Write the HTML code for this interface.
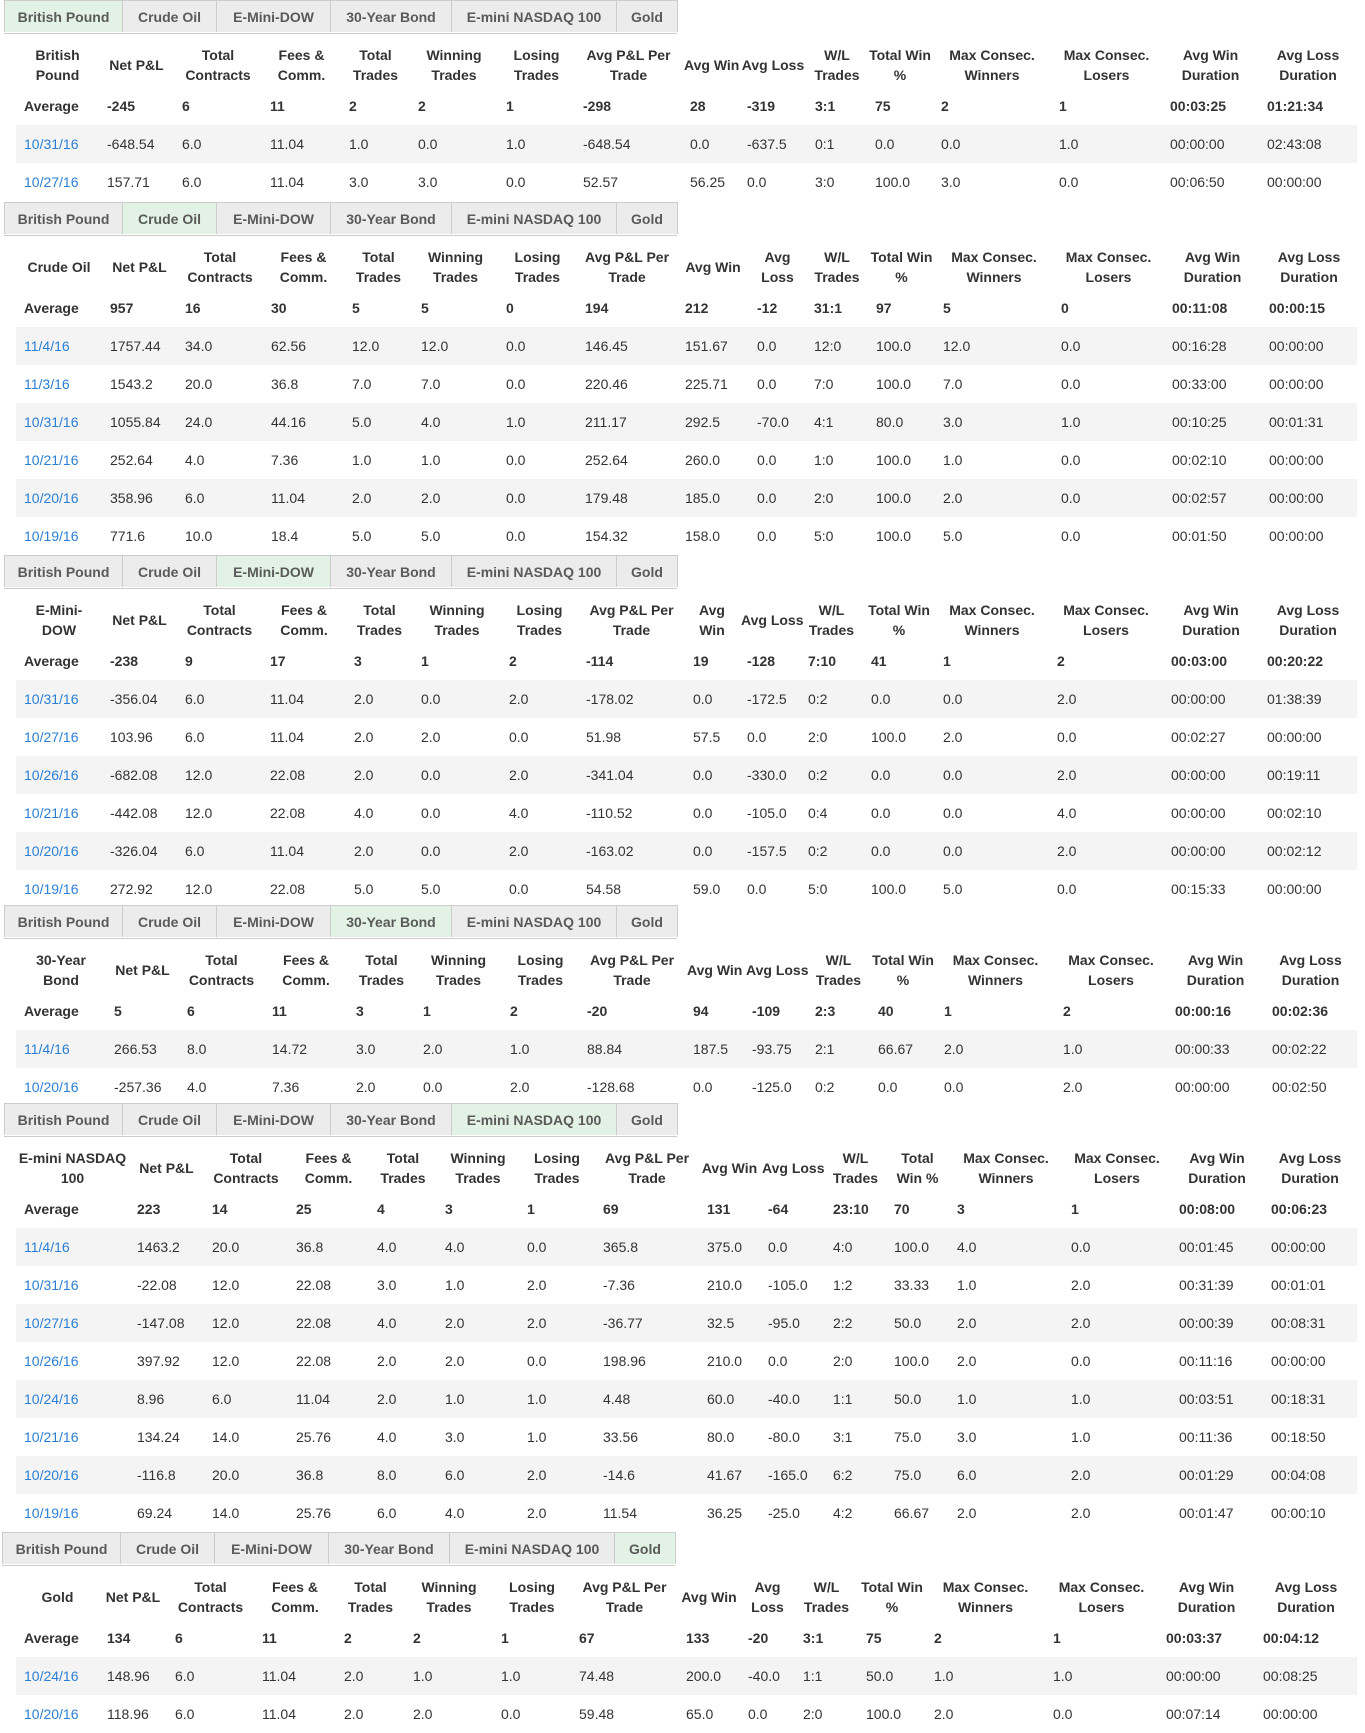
<!DOCTYPE html>
<html><head><meta charset="utf-8">
<style>
body{margin:0;background:#fff;font-family:"Liberation Sans",Arial,sans-serif;color:#333;width:1365px;height:1733px;position:relative;overflow:hidden}
.sec{position:absolute;left:0;width:1365px}
.tabs{position:absolute;top:0;left:4px;height:33px;display:flex;border-bottom:1px solid #ccc}
.tabs div{height:32px;line-height:32px;box-sizing:border-box;border:1px solid #ccc;border-bottom:none;margin-right:-1px;background:#ececec;color:#5a5a5a;font-size:14px;font-weight:bold;text-align:center}
.tabs div.a{background:#e2f2e4}
table{position:absolute;top:33px;left:16px;border-collapse:collapse;table-layout:fixed;width:1341px;font-size:14px}
th{height:54px;font-weight:bold;text-align:center;vertical-align:middle;line-height:20px;padding:9px 2px 0 2px;box-sizing:border-box;white-space:nowrap;color:#333}
td{height:38px;padding:0 0 0 8px;white-space:nowrap;overflow:visible;vertical-align:middle}
tr.av td{font-weight:bold}
tr.s td{background:#f4f4f4}
td a{color:#2a7fd4;text-decoration:none}
</style></head><body>

<!-- Section 1 -->
<div class="sec" style="top:0">
<div class="tabs"><div class="a" style="width:119px">British Pound</div><div style="width:95px">Crude Oil</div><div style="width:115px">E-Mini-DOW</div><div style="width:122px">30-Year Bond</div><div style="width:166px">E-mini NASDAQ 100</div><div style="width:62px">Gold</div></div>
<table><colgroup><col style="width:83px"><col style="width:75px"><col style="width:88px"><col style="width:79px"><col style="width:69px"><col style="width:88px"><col style="width:77px"><col style="width:107px"><col style="width:57px"><col style="width:68px"><col style="width:60px"><col style="width:66px"><col style="width:118px"><col style="width:111px"><col style="width:97px"><col style="width:98px"></colgroup>
<tr><th>British<br>Pound</th><th>Net P&amp;L</th><th>Total<br>Contracts</th><th>Fees &amp;<br>Comm.</th><th>Total<br>Trades</th><th>Winning<br>Trades</th><th>Losing<br>Trades</th><th>Avg P&amp;L Per<br>Trade</th><th>Avg Win</th><th>Avg Loss</th><th>W/L<br>Trades</th><th>Total Win<br>%</th><th>Max Consec.<br>Winners</th><th>Max Consec.<br>Losers</th><th>Avg Win<br>Duration</th><th>Avg Loss<br>Duration</th></tr>
<tr class="av"><td>Average</td><td>-245</td><td>6</td><td>11</td><td>2</td><td>2</td><td>1</td><td>-298</td><td>28</td><td>-319</td><td>3:1</td><td>75</td><td>2</td><td>1</td><td>00:03:25</td><td>01:21:34</td></tr>
<tr class="s"><td><a>10/31/16</a></td><td>-648.54</td><td>6.0</td><td>11.04</td><td>1.0</td><td>0.0</td><td>1.0</td><td>-648.54</td><td>0.0</td><td>-637.5</td><td>0:1</td><td>0.0</td><td>0.0</td><td>1.0</td><td>00:00:00</td><td>02:43:08</td></tr>
<tr><td><a>10/27/16</a></td><td>157.71</td><td>6.0</td><td>11.04</td><td>3.0</td><td>3.0</td><td>0.0</td><td>52.57</td><td>56.25</td><td>0.0</td><td>3:0</td><td>100.0</td><td>3.0</td><td>0.0</td><td>00:06:50</td><td>00:00:00</td></tr>
</table></div>

<!-- Section 2 -->
<div class="sec" style="top:202px">
<div class="tabs"><div style="width:119px">British Pound</div><div class="a" style="width:95px">Crude Oil</div><div style="width:115px">E-Mini-DOW</div><div style="width:122px">30-Year Bond</div><div style="width:166px">E-mini NASDAQ 100</div><div style="width:62px">Gold</div></div>
<table><colgroup><col style="width:86px"><col style="width:75px"><col style="width:86px"><col style="width:81px"><col style="width:69px"><col style="width:85px"><col style="width:79px"><col style="width:100px"><col style="width:72px"><col style="width:57px"><col style="width:62px"><col style="width:67px"><col style="width:118px"><col style="width:111px"><col style="width:97px"><col style="width:96px"></colgroup>
<tr><th>Crude Oil</th><th>Net P&amp;L</th><th>Total<br>Contracts</th><th>Fees &amp;<br>Comm.</th><th>Total<br>Trades</th><th>Winning<br>Trades</th><th>Losing<br>Trades</th><th>Avg P&amp;L Per<br>Trade</th><th>Avg Win</th><th>Avg<br>Loss</th><th>W/L<br>Trades</th><th>Total Win<br>%</th><th>Max Consec.<br>Winners</th><th>Max Consec.<br>Losers</th><th>Avg Win<br>Duration</th><th>Avg Loss<br>Duration</th></tr>
<tr class="av"><td>Average</td><td>957</td><td>16</td><td>30</td><td>5</td><td>5</td><td>0</td><td>194</td><td>212</td><td>-12</td><td>31:1</td><td>97</td><td>5</td><td>0</td><td>00:11:08</td><td>00:00:15</td></tr>
<tr class="s"><td><a>11/4/16</a></td><td>1757.44</td><td>34.0</td><td>62.56</td><td>12.0</td><td>12.0</td><td>0.0</td><td>146.45</td><td>151.67</td><td>0.0</td><td>12:0</td><td>100.0</td><td>12.0</td><td>0.0</td><td>00:16:28</td><td>00:00:00</td></tr>
<tr><td><a>11/3/16</a></td><td>1543.2</td><td>20.0</td><td>36.8</td><td>7.0</td><td>7.0</td><td>0.0</td><td>220.46</td><td>225.71</td><td>0.0</td><td>7:0</td><td>100.0</td><td>7.0</td><td>0.0</td><td>00:33:00</td><td>00:00:00</td></tr>
<tr class="s"><td><a>10/31/16</a></td><td>1055.84</td><td>24.0</td><td>44.16</td><td>5.0</td><td>4.0</td><td>1.0</td><td>211.17</td><td>292.5</td><td>-70.0</td><td>4:1</td><td>80.0</td><td>3.0</td><td>1.0</td><td>00:10:25</td><td>00:01:31</td></tr>
<tr><td><a>10/21/16</a></td><td>252.64</td><td>4.0</td><td>7.36</td><td>1.0</td><td>1.0</td><td>0.0</td><td>252.64</td><td>260.0</td><td>0.0</td><td>1:0</td><td>100.0</td><td>1.0</td><td>0.0</td><td>00:02:10</td><td>00:00:00</td></tr>
<tr class="s"><td><a>10/20/16</a></td><td>358.96</td><td>6.0</td><td>11.04</td><td>2.0</td><td>2.0</td><td>0.0</td><td>179.48</td><td>185.0</td><td>0.0</td><td>2:0</td><td>100.0</td><td>2.0</td><td>0.0</td><td>00:02:57</td><td>00:00:00</td></tr>
<tr><td><a>10/19/16</a></td><td>771.6</td><td>10.0</td><td>18.4</td><td>5.0</td><td>5.0</td><td>0.0</td><td>154.32</td><td>158.0</td><td>0.0</td><td>5:0</td><td>100.0</td><td>5.0</td><td>0.0</td><td>00:01:50</td><td>00:00:00</td></tr>
</table></div>

<!-- Section 3 -->
<div class="sec" style="top:555px">
<div class="tabs"><div style="width:119px">British Pound</div><div style="width:95px">Crude Oil</div><div class="a" style="width:115px">E-Mini-DOW</div><div style="width:122px">30-Year Bond</div><div style="width:166px">E-mini NASDAQ 100</div><div style="width:62px">Gold</div></div>
<table><colgroup><col style="width:86px"><col style="width:75px"><col style="width:85px"><col style="width:84px"><col style="width:67px"><col style="width:88px"><col style="width:77px"><col style="width:107px"><col style="width:54px"><col style="width:61px"><col style="width:63px"><col style="width:72px"><col style="width:114px"><col style="width:114px"><col style="width:96px"><col style="width:98px"></colgroup>
<tr><th>E-Mini-<br>DOW</th><th>Net P&amp;L</th><th>Total<br>Contracts</th><th>Fees &amp;<br>Comm.</th><th>Total<br>Trades</th><th>Winning<br>Trades</th><th>Losing<br>Trades</th><th>Avg P&amp;L Per<br>Trade</th><th>Avg<br>Win</th><th>Avg Loss</th><th>W/L<br>Trades</th><th>Total Win<br>%</th><th>Max Consec.<br>Winners</th><th>Max Consec.<br>Losers</th><th>Avg Win<br>Duration</th><th>Avg Loss<br>Duration</th></tr>
<tr class="av"><td>Average</td><td>-238</td><td>9</td><td>17</td><td>3</td><td>1</td><td>2</td><td>-114</td><td>19</td><td>-128</td><td>7:10</td><td>41</td><td>1</td><td>2</td><td>00:03:00</td><td>00:20:22</td></tr>
<tr class="s"><td><a>10/31/16</a></td><td>-356.04</td><td>6.0</td><td>11.04</td><td>2.0</td><td>0.0</td><td>2.0</td><td>-178.02</td><td>0.0</td><td>-172.5</td><td>0:2</td><td>0.0</td><td>0.0</td><td>2.0</td><td>00:00:00</td><td>01:38:39</td></tr>
<tr><td><a>10/27/16</a></td><td>103.96</td><td>6.0</td><td>11.04</td><td>2.0</td><td>2.0</td><td>0.0</td><td>51.98</td><td>57.5</td><td>0.0</td><td>2:0</td><td>100.0</td><td>2.0</td><td>0.0</td><td>00:02:27</td><td>00:00:00</td></tr>
<tr class="s"><td><a>10/26/16</a></td><td>-682.08</td><td>12.0</td><td>22.08</td><td>2.0</td><td>0.0</td><td>2.0</td><td>-341.04</td><td>0.0</td><td>-330.0</td><td>0:2</td><td>0.0</td><td>0.0</td><td>2.0</td><td>00:00:00</td><td>00:19:11</td></tr>
<tr><td><a>10/21/16</a></td><td>-442.08</td><td>12.0</td><td>22.08</td><td>4.0</td><td>0.0</td><td>4.0</td><td>-110.52</td><td>0.0</td><td>-105.0</td><td>0:4</td><td>0.0</td><td>0.0</td><td>4.0</td><td>00:00:00</td><td>00:02:10</td></tr>
<tr class="s"><td><a>10/20/16</a></td><td>-326.04</td><td>6.0</td><td>11.04</td><td>2.0</td><td>0.0</td><td>2.0</td><td>-163.02</td><td>0.0</td><td>-157.5</td><td>0:2</td><td>0.0</td><td>0.0</td><td>2.0</td><td>00:00:00</td><td>00:02:12</td></tr>
<tr><td><a>10/19/16</a></td><td>272.92</td><td>12.0</td><td>22.08</td><td>5.0</td><td>5.0</td><td>0.0</td><td>54.58</td><td>59.0</td><td>0.0</td><td>5:0</td><td>100.0</td><td>5.0</td><td>0.0</td><td>00:15:33</td><td>00:00:00</td></tr>
</table></div>

<!-- Section 4 -->
<div class="sec" style="top:905px">
<div class="tabs"><div style="width:119px">British Pound</div><div style="width:95px">Crude Oil</div><div style="width:115px">E-Mini-DOW</div><div class="a" style="width:122px">30-Year Bond</div><div style="width:166px">E-mini NASDAQ 100</div><div style="width:62px">Gold</div></div>
<table><colgroup><col style="width:90px"><col style="width:73px"><col style="width:85px"><col style="width:84px"><col style="width:67px"><col style="width:87px"><col style="width:77px"><col style="width:106px"><col style="width:59px"><col style="width:63px"><col style="width:63px"><col style="width:66px"><col style="width:119px"><col style="width:112px"><col style="width:97px"><col style="width:93px"></colgroup>
<tr><th>30-Year<br>Bond</th><th>Net P&amp;L</th><th>Total<br>Contracts</th><th>Fees &amp;<br>Comm.</th><th>Total<br>Trades</th><th>Winning<br>Trades</th><th>Losing<br>Trades</th><th>Avg P&amp;L Per<br>Trade</th><th>Avg Win</th><th>Avg Loss</th><th>W/L<br>Trades</th><th>Total Win<br>%</th><th>Max Consec.<br>Winners</th><th>Max Consec.<br>Losers</th><th>Avg Win<br>Duration</th><th>Avg Loss<br>Duration</th></tr>
<tr class="av"><td>Average</td><td>5</td><td>6</td><td>11</td><td>3</td><td>1</td><td>2</td><td>-20</td><td>94</td><td>-109</td><td>2:3</td><td>40</td><td>1</td><td>2</td><td>00:00:16</td><td>00:02:36</td></tr>
<tr class="s"><td><a>11/4/16</a></td><td>266.53</td><td>8.0</td><td>14.72</td><td>3.0</td><td>2.0</td><td>1.0</td><td>88.84</td><td>187.5</td><td>-93.75</td><td>2:1</td><td>66.67</td><td>2.0</td><td>1.0</td><td>00:00:33</td><td>00:02:22</td></tr>
<tr><td><a>10/20/16</a></td><td>-257.36</td><td>4.0</td><td>7.36</td><td>2.0</td><td>0.0</td><td>2.0</td><td>-128.68</td><td>0.0</td><td>-125.0</td><td>0:2</td><td>0.0</td><td>0.0</td><td>2.0</td><td>00:00:00</td><td>00:02:50</td></tr>
</table></div>

<!-- Section 5 -->
<div class="sec" style="top:1103px">
<div class="tabs"><div style="width:119px">British Pound</div><div style="width:95px">Crude Oil</div><div style="width:115px">E-Mini-DOW</div><div style="width:122px">30-Year Bond</div><div class="a" style="width:166px">E-mini NASDAQ 100</div><div style="width:62px">Gold</div></div>
<table><colgroup><col style="width:113px"><col style="width:75px"><col style="width:84px"><col style="width:81px"><col style="width:68px"><col style="width:82px"><col style="width:76px"><col style="width:104px"><col style="width:61px"><col style="width:65px"><col style="width:61px"><col style="width:63px"><col style="width:114px"><col style="width:108px"><col style="width:92px"><col style="width:94px"></colgroup>
<tr><th>E-mini NASDAQ<br>100</th><th>Net P&amp;L</th><th>Total<br>Contracts</th><th>Fees &amp;<br>Comm.</th><th>Total<br>Trades</th><th>Winning<br>Trades</th><th>Losing<br>Trades</th><th>Avg P&amp;L Per<br>Trade</th><th>Avg Win</th><th>Avg Loss</th><th>W/L<br>Trades</th><th>Total<br>Win %</th><th>Max Consec.<br>Winners</th><th>Max Consec.<br>Losers</th><th>Avg Win<br>Duration</th><th>Avg Loss<br>Duration</th></tr>
<tr class="av"><td>Average</td><td>223</td><td>14</td><td>25</td><td>4</td><td>3</td><td>1</td><td>69</td><td>131</td><td>-64</td><td>23:10</td><td>70</td><td>3</td><td>1</td><td>00:08:00</td><td>00:06:23</td></tr>
<tr class="s"><td><a>11/4/16</a></td><td>1463.2</td><td>20.0</td><td>36.8</td><td>4.0</td><td>4.0</td><td>0.0</td><td>365.8</td><td>375.0</td><td>0.0</td><td>4:0</td><td>100.0</td><td>4.0</td><td>0.0</td><td>00:01:45</td><td>00:00:00</td></tr>
<tr><td><a>10/31/16</a></td><td>-22.08</td><td>12.0</td><td>22.08</td><td>3.0</td><td>1.0</td><td>2.0</td><td>-7.36</td><td>210.0</td><td>-105.0</td><td>1:2</td><td>33.33</td><td>1.0</td><td>2.0</td><td>00:31:39</td><td>00:01:01</td></tr>
<tr class="s"><td><a>10/27/16</a></td><td>-147.08</td><td>12.0</td><td>22.08</td><td>4.0</td><td>2.0</td><td>2.0</td><td>-36.77</td><td>32.5</td><td>-95.0</td><td>2:2</td><td>50.0</td><td>2.0</td><td>2.0</td><td>00:00:39</td><td>00:08:31</td></tr>
<tr><td><a>10/26/16</a></td><td>397.92</td><td>12.0</td><td>22.08</td><td>2.0</td><td>2.0</td><td>0.0</td><td>198.96</td><td>210.0</td><td>0.0</td><td>2:0</td><td>100.0</td><td>2.0</td><td>0.0</td><td>00:11:16</td><td>00:00:00</td></tr>
<tr class="s"><td><a>10/24/16</a></td><td>8.96</td><td>6.0</td><td>11.04</td><td>2.0</td><td>1.0</td><td>1.0</td><td>4.48</td><td>60.0</td><td>-40.0</td><td>1:1</td><td>50.0</td><td>1.0</td><td>1.0</td><td>00:03:51</td><td>00:18:31</td></tr>
<tr><td><a>10/21/16</a></td><td>134.24</td><td>14.0</td><td>25.76</td><td>4.0</td><td>3.0</td><td>1.0</td><td>33.56</td><td>80.0</td><td>-80.0</td><td>3:1</td><td>75.0</td><td>3.0</td><td>1.0</td><td>00:11:36</td><td>00:18:50</td></tr>
<tr class="s"><td><a>10/20/16</a></td><td>-116.8</td><td>20.0</td><td>36.8</td><td>8.0</td><td>6.0</td><td>2.0</td><td>-14.6</td><td>41.67</td><td>-165.0</td><td>6:2</td><td>75.0</td><td>6.0</td><td>2.0</td><td>00:01:29</td><td>00:04:08</td></tr>
<tr><td><a>10/19/16</a></td><td>69.24</td><td>14.0</td><td>25.76</td><td>6.0</td><td>4.0</td><td>2.0</td><td>11.54</td><td>36.25</td><td>-25.0</td><td>4:2</td><td>66.67</td><td>2.0</td><td>2.0</td><td>00:01:47</td><td>00:00:10</td></tr>
</table></div>

<!-- Section 6 -->
<div class="sec" style="top:1532px">
<div class="tabs" style="left:2px"><div style="width:119px">British Pound</div><div style="width:95px">Crude Oil</div><div style="width:115px">E-Mini-DOW</div><div style="width:122px">30-Year Bond</div><div style="width:166px">E-mini NASDAQ 100</div><div class="a" style="width:62px">Gold</div></div>
<table><colgroup><col style="width:83px"><col style="width:68px"><col style="width:87px"><col style="width:82px"><col style="width:69px"><col style="width:88px"><col style="width:78px"><col style="width:107px"><col style="width:62px"><col style="width:55px"><col style="width:63px"><col style="width:68px"><col style="width:119px"><col style="width:113px"><col style="width:97px"><col style="width:102px"></colgroup>
<tr><th>Gold</th><th>Net P&amp;L</th><th>Total<br>Contracts</th><th>Fees &amp;<br>Comm.</th><th>Total<br>Trades</th><th>Winning<br>Trades</th><th>Losing<br>Trades</th><th>Avg P&amp;L Per<br>Trade</th><th>Avg Win</th><th>Avg<br>Loss</th><th>W/L<br>Trades</th><th>Total Win<br>%</th><th>Max Consec.<br>Winners</th><th>Max Consec.<br>Losers</th><th>Avg Win<br>Duration</th><th>Avg Loss<br>Duration</th></tr>
<tr class="av"><td>Average</td><td>134</td><td>6</td><td>11</td><td>2</td><td>2</td><td>1</td><td>67</td><td>133</td><td>-20</td><td>3:1</td><td>75</td><td>2</td><td>1</td><td>00:03:37</td><td>00:04:12</td></tr>
<tr class="s"><td><a>10/24/16</a></td><td>148.96</td><td>6.0</td><td>11.04</td><td>2.0</td><td>1.0</td><td>1.0</td><td>74.48</td><td>200.0</td><td>-40.0</td><td>1:1</td><td>50.0</td><td>1.0</td><td>1.0</td><td>00:00:00</td><td>00:08:25</td></tr>
<tr><td><a>10/20/16</a></td><td>118.96</td><td>6.0</td><td>11.04</td><td>2.0</td><td>2.0</td><td>0.0</td><td>59.48</td><td>65.0</td><td>0.0</td><td>2:0</td><td>100.0</td><td>2.0</td><td>0.0</td><td>00:07:14</td><td>00:00:00</td></tr>
</table></div>

</body></html>
